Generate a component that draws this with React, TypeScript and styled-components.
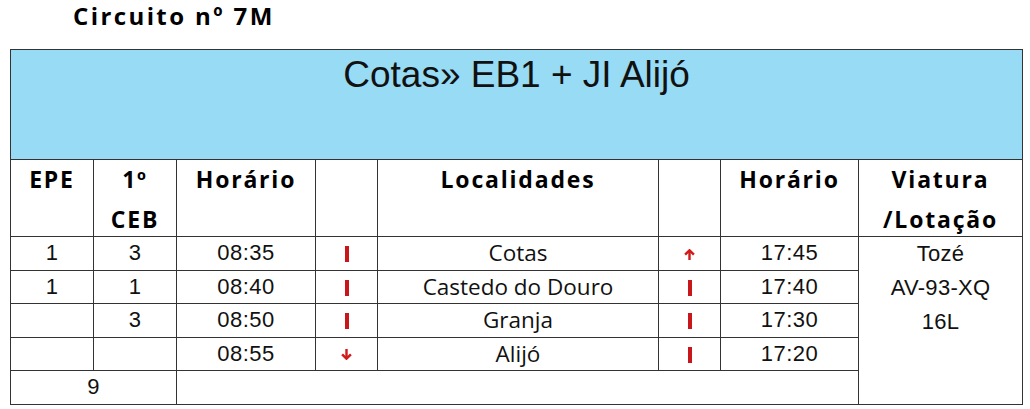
import styled, { createGlobalStyle } from 'styled-components';

const GlobalStyle = createGlobalStyle`
  body {
    margin: 0;
    background: #fff;
    font-family: 'Liberation Sans', Arial, sans-serif;
    color: #111;
  }
`;

type Dir = 'bar' | 'up' | 'down';

const rows: { epe: string; ceb: string; out: string; go: Dir; place: string; back: Dir; ret: string }[] = [
  { epe: '1', ceb: '3', out: '08:35', go: 'bar', place: 'Cotas', back: 'up', ret: '17:45' },
  { epe: '1', ceb: '1', out: '08:40', go: 'bar', place: 'Castedo do Douro', back: 'bar', ret: '17:40' },
  { epe: '', ceb: '3', out: '08:50', go: 'bar', place: 'Granja', back: 'bar', ret: '17:30' },
  { epe: '', ceb: '', out: '08:55', go: 'down', place: 'Alijó', back: 'bar', ret: '17:20' },
];

const widths = [83, 83, 139, 62, 281, 62, 138, 164];

function Marker({ dir }: { dir: Dir }) {
  if (dir === 'bar') return <Bar />;
  return (
    <Arrow viewBox="0 0 10 10" $up={dir === 'up'}>
      <path d="M5 0 V9" stroke="#d11a1a" strokeWidth="2.2" />
      <path d="M1 4.8 L5 8.8 L9 4.8" fill="none" stroke="#d11a1a" strokeWidth="2.2" />
    </Arrow>
  );
}

export default function App() {
  return (
    <Page>
      <GlobalStyle />
      <Title>Circuito nº 7M</Title>
      <Table>
        <colgroup>
          {widths.map((w, i) => (
            <col key={i} style={{ width: w }} />
          ))}
        </colgroup>
        <tbody>
          <tr>
            <Banner colSpan={8}>Cotas» EB1 + JI Alijó</Banner>
          </tr>
          <tr>
            <Head>
              <HeadText>EPE</HeadText>
            </Head>
            <Head>
              <HeadText>
                1º
                <br />
                CEB
              </HeadText>
            </Head>
            <Head>
              <HeadText>Horário</HeadText>
            </Head>
            <Head>
              <HeadText />
            </Head>
            <Head>
              <HeadText>Localidades</HeadText>
            </Head>
            <Head>
              <HeadText />
            </Head>
            <Head>
              <HeadText>Horário</HeadText>
            </Head>
            <Head>
              <HeadText>
                Viatura
                <br />
                /Lotação
              </HeadText>
            </Head>
          </tr>
          {rows.map((r, i) => (
            <DataRow key={i}>
              <Cell>{r.epe}</Cell>
              <Cell>{r.ceb}</Cell>
              <Cell>{r.out}</Cell>
              <Cell>
                <Marker dir={r.go} />
              </Cell>
              <Place>{r.place}</Place>
              <Cell>
                <Marker dir={r.back} />
              </Cell>
              <Cell>{r.ret}</Cell>
              {i === 0 && (
                <Vehicle rowSpan={5}>
                  Tozé
                  <br />
                  AV-93-XQ
                  <br />
                  16L
                </Vehicle>
              )}
            </DataRow>
          ))}
          <DataRow>
            <Cell colSpan={2}>9</Cell>
            <Cell colSpan={5} />
          </DataRow>
        </tbody>
      </Table>
    </Page>
  );
}

const Page = styled.div`
  width: 1030px;
  height: 409px;
  padding: 1px 0 0 10px;
  box-sizing: border-box;
  overflow: hidden;
`;

const Title = styled.h1`
  margin: 0 0 0 63px;
  font-family: 'Open Sans', sans-serif;
  font-size: 24px;
  line-height: 30px;
  font-weight: 700;
  letter-spacing: 2.4px;
  color: #000;
`;

const Table = styled.table`
  margin-top: 18px;
  width: 1012px;
  table-layout: fixed;
  border-collapse: collapse;
  border: 1.5px solid #222;

  td {
    border: 1px solid #333;
    padding: 0;
    text-align: center;
  }
`;

const Banner = styled.td`
  height: 105px;
  background: #97dbf5;
  vertical-align: top;
  font-size: 37px;
  line-height: 42px;
  padding-top: 4px !important;
  color: #111;
`;

const Head = styled.td`
  vertical-align: top;
`;

const HeadText = styled.div`
  height: 76px;
  margin-top: -1px;
  margin-bottom: 1px;
  font-family: 'Open Sans', sans-serif;
  font-size: 23px;
  line-height: 40px;
  font-weight: 700;
  letter-spacing: 1.8px;
  color: #000;
`;

const DataRow = styled.tr`
  height: 33.5px;
`;

const Cell = styled.td`
  vertical-align: middle;
  font-size: 22px;
  line-height: 26px;
  letter-spacing: 0.5px;
`;

const Place = styled(Cell)`
  font-family: 'Open Sans', sans-serif;
  font-size: 22.5px;
  letter-spacing: 0;
`;

const Vehicle = styled.td`
  vertical-align: top;
  font-size: 22px;
  line-height: 34px;
  letter-spacing: 0.3px;
`;

const Bar = styled.span`
  display: inline-block;
  width: 4px;
  height: 16px;
  background: #c8171b;
  vertical-align: middle;
`;

const Arrow = styled.svg<{ $up: boolean }>`
  display: inline-block;
  width: 11px;
  height: 11px;
  vertical-align: middle;
  transform: ${(p) => (p.$up ? 'rotate(180deg)' : 'none')};
`;
